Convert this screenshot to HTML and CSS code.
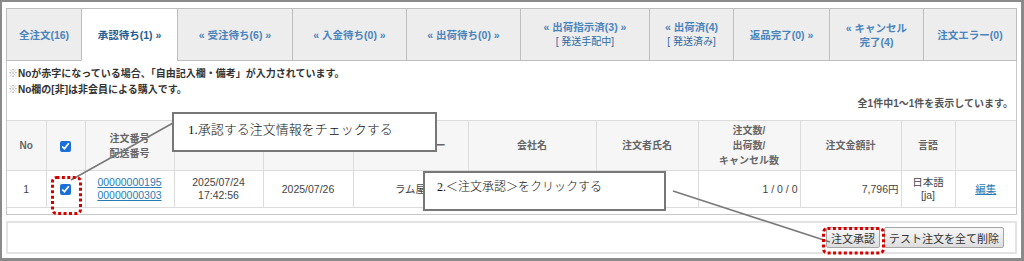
FILE: index.html
```html
<!DOCTYPE html>
<html lang="ja">
<head>
  <meta charset="UTF-8" />
  <title>受注管理 - 承認待ち</title>
  <link rel="stylesheet" href="styles.css">
</head>
<body>
  <div class="frame">
    <ul class="tabs">
      <li class="tab"><a href="#">全注文(16)</a></li>
      <li class="tab active"><a href="#">承認待ち(1) »</a></li>
      <li class="tab"><a href="#">« 受注待ち(6) »</a></li>
      <li class="tab"><a href="#">« 入金待ち(0) »</a></li>
      <li class="tab"><a href="#">« 出荷待ち(0) »</a></li>
      <li class="tab"><a href="#">« 出荷指示済(3) »<br><span class="sub">[ 発送手配中]</span></a></li>
      <li class="tab"><a href="#">« 出荷済(4)<br><span class="sub">[ 発送済み]</span></a></li>
      <li class="tab"><a href="#">返品完了(0) »</a></li>
      <li class="tab"><a href="#">« キャンセル<br>完了(4)</a></li>
      <li class="tab"><a href="#">注文エラー(0)</a></li>
    </ul>

    <div class="panel">
      <p class="note"><span class="mark">※</span>Noが赤字になっている場合、「自由記入欄・備考」が入力されています。</p>
      <p class="note"><span class="mark">※</span>No欄の[非]は非会員による購入です。</p>
      <p class="count">全1件中1〜1件を表示しています。</p>

      <table class="orders">
        <colgroup>
          <col style="width:39px"><col style="width:39px"><col style="width:89px"><col style="width:89px">
          <col style="width:90px"><col style="width:115px"><col style="width:128px"><col style="width:102px">
          <col style="width:102px"><col style="width:101px"><col style="width:54px"><col>
        </colgroup>
        <thead>
          <tr>
            <th>No</th>
            <th><input type="checkbox" class="check" checked></th>
            <th>注文番号<br>配送番号</th>
            <th>注文日時</th>
            <th>入金日</th>
            <th>出荷元メーカー</th>
            <th>会社名</th>
            <th>注文者氏名</th>
            <th>注文数/<br>出荷数/<br>キャンセル数</th>
            <th>注文金額計</th>
            <th>言語</th>
            <th></th>
          </tr>
        </thead>
        <tbody>
          <tr>
            <td>1</td>
            <td><input type="checkbox" class="check" checked></td>
            <td><a href="#" class="link">00000000195</a><br><a href="#" class="link">00000000303</a></td>
            <td>2025/07/24<br>17:42:56</td>
            <td>2025/07/26</td>
            <td>ラム屋</td>
            <td></td>
            <td></td>
            <td class="num">1 / 0 / 0</td>
            <td class="num">7,796円</td>
            <td>日本語<br>[ja]</td>
            <td><a href="#" class="link">編集</a></td>
          </tr>
        </tbody>
      </table>
    </div>

    <div class="actions">
      <button class="btn">注文承認</button>
      <button class="btn">テスト注文を全て削除</button>
    </div>
  </div>

  <!-- annotation layer drawn over the screen -->
  <div class="overlay">
    <svg class="marks" width="1024" height="261" viewBox="0 0 1024 261">
      <line x1="71" y1="180" x2="173" y2="123" stroke="#7a7a7a" stroke-width="1.6"/>
      <line x1="673" y1="191" x2="830" y2="242" stroke="#7a7a7a" stroke-width="1.6"/>
      <rect x="52.5" y="177.5" width="28" height="36" rx="4" fill="none" stroke="#d40000" stroke-width="3" stroke-dasharray="3 2.4"/>
      <rect x="823.5" y="228.5" width="60" height="24.5" rx="4" fill="none" stroke="#d40000" stroke-width="3" stroke-dasharray="3 2.4"/>
    </svg>
    <div class="callout callout-check">1.承認する注文情報をチェックする</div>
    <div class="callout callout-approve">2.＜注文承認＞をクリックする</div>
  </div>
</body>
</html>
```

FILE: styles.css
```css
body {
  margin: 0;
  position: relative;
  background: #fff;
  font-family: "Liberation Sans", "Noto Sans CJK JP", sans-serif;
  font-size: 10.5px;
  color: #444;
}
.frame {
  box-sizing: border-box;
  width: 1024px;
  height: 261px;
  border: solid #8a8a8a;
  border-width: 2px 3px 3px 2px;
  padding: 6px 4px 0 4px;
}

/* tabs */
.tabs {
  display: grid;
  grid-template-columns: 75px 96px 115px 114px 114px 129px 84px 96px 94px 94px;
  height: 53px;
  margin: 0;
  padding: 0;
  list-style: none;
}
.tab {
  display: flex;
  align-items: center;
  justify-content: center;
  text-align: center;
  line-height: 14px;
  background: #ededed;
  border: 1px solid #bdbdbd;
  border-right: none;
}
.tab:last-child { border-right: 1px solid #bdbdbd; }
.tab a {
  color: #4a84bd;
  font-weight: bold;
  text-decoration: none;
}
.tab .sub { color: #2e6aa3; font-size: 10px; font-weight: normal; }
.tab.active {
  background: #fff;
  border-bottom-color: #fff;
}
.tab.active a { color: #1f5d92; }

/* panel with notes and table */
.panel {
  box-sizing: border-box;
  height: 154px;
  padding: 5px 0 0;
  border: 1px solid #c8c8c8;
  border-top: none;
}
.note {
  margin: 0;
  padding-left: 1px;
  font-size: 10px;
  line-height: 16px;
  font-weight: bold;
  color: #333;
}
.note .mark { color: #aaa; font-weight: normal; }
.count {
  margin: 0 0 10px;
  padding-right: 3px;
  text-align: right;
  font-size: 10px;
  line-height: 12px;
  font-weight: bold;
  color: #555;
}

.orders {
  width: 100%;
  border-collapse: collapse;
  table-layout: fixed;
}
.orders th,
.orders td {
  border: 1px solid #dcdcdc;
  padding: 0 3px;
  text-align: center;
  line-height: 14px;
}
.orders th:first-child,
.orders td:first-child { border-left: none; }
.orders th:last-child,
.orders td:last-child { border-right: none; }
.orders th {
  height: 49px;
  background: #f6f6f6;
  color: #666;
  font-weight: bold;
  font-size: 10px;
  line-height: 15px;
}
.orders td {
  height: 36px;
  line-height: 13px;
}
.orders td.num { text-align: right; padding-right: 2px; }
.check {
  width: 11px;
  height: 11px;
  margin: 0;
  vertical-align: middle;
  accent-color: #1b6fd9;
}
.link { color: #2a7ab6; text-decoration: underline; }

/* bottom action bar */
.actions {
  box-sizing: border-box;
  height: 33px;
  margin-top: 6px;
  border: 2px solid #e3e3e3;
  display: flex;
  align-items: center;
  justify-content: flex-end;
  gap: 4px;
  padding-right: 11px;
}
.btn {
  height: 21px;
  padding: 0 4px;
  font-family: "Liberation Sans", "Noto Sans CJK JP", sans-serif;
  font-size: 11px;
  color: #333;
  background: linear-gradient(#f8f8f8, #dddddd);
  border: 1px solid #a5a5a5;
  border-radius: 2px;
}

/* annotations */
.overlay {
  position: absolute;
  top: 0;
  left: 0;
  width: 1024px;
  height: 261px;
  pointer-events: none;
}
.marks { position: absolute; top: 0; left: 0; }
.callout {
  position: absolute;
  box-sizing: border-box;
  height: 40px;
  background: #fff;
  border: 2px solid #777;
  color: #111;
  font-family: "Liberation Serif", "Noto Sans CJK JP", serif;
  font-weight: 300;
  line-height: 20px;
  white-space: nowrap;
}
.callout-check {
  left: 172px;
  top: 112px;
  width: 265px;
  padding: 6px 0 0 14px;
  font-size: 13px;
}
.callout-approve {
  left: 423px;
  top: 171px;
  width: 243px;
  padding: 4px 0 0 12px;
  font-size: 12px;
}
```
